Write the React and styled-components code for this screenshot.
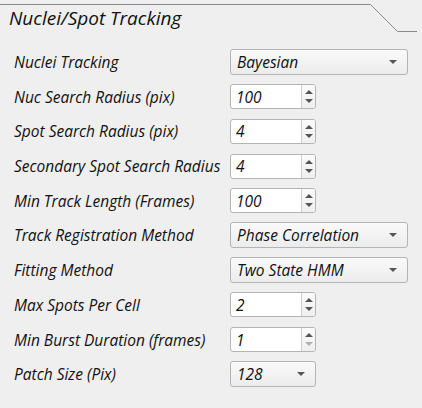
import styled, { createGlobalStyle } from "styled-components";

const GlobalStyle = createGlobalStyle`
  html, body {
    margin: 0;
    padding: 0;
    background: #efefef;
  }
  body {
    font-family: "Open Sans", "DejaVu Sans", sans-serif;
    font-style: italic;
    color: #111;
  }
`;

const rows = [
  { label: "Nuclei Tracking", kind: "combo", value: "Bayesian", width: 178 },
  { label: "Nuc Search Radius (pix)", kind: "spin", value: "100" },
  { label: "Spot Search Radius (pix)", kind: "spin", value: "4" },
  { label: "Secondary Spot Search Radius", kind: "spin", value: "4" },
  { label: "Min Track Length (Frames)", kind: "spin", value: "100" },
  { label: "Track Registration Method", kind: "combo", value: "Phase Correlation", width: 178 },
  { label: "Fitting Method", kind: "combo", value: "Two State HMM", width: 178 },
  { label: "Max Spots Per Cell", kind: "spin", value: "2" },
  { label: "Min Burst Duration (frames)", kind: "spin", value: "1", atMin: true },
  { label: "Patch Size (Pix)", kind: "combo", value: "128", width: 86 },
];

export default function App() {
  return (
    <Panel>
      <GlobalStyle />
      <Header>
        <Title>Nuclei/Spot Tracking</Title>
        <TabEdge width="422" height="36" viewBox="0 0 422 36">
          <polyline
            points="0,4.5 370.5,4.5 397.5,31.5 417,31.5"
            fill="none"
            stroke="#8a8a8a"
            strokeWidth="1"
          />
        </TabEdge>
      </Header>
      <Form>
        {rows.map((row) => (
          <Row key={row.label}>
            <Label>{row.label}</Label>
            {row.kind === "combo" ? (
              <Combo $width={row.width}>
                <span>{row.value}</span>
                <Arrow />
              </Combo>
            ) : (
              <Spin>
                <SpinText>{row.value}</SpinText>
                <SpinButtons>
                  <Tri $up />
                  <Tri $dim={row.atMin} />
                </SpinButtons>
              </Spin>
            )}
          </Row>
        ))}
      </Form>
    </Panel>
  );
}

const Panel = styled.div`
  width: 422px;
  height: 408px;
  background: #efefef;
  overflow: hidden;
`;

const Header = styled.div`
  position: relative;
  height: 36px;
  padding: 6px 0 0 9px;
  box-sizing: border-box;
`;

const TabEdge = styled.svg`
  position: absolute;
  left: 0;
  top: 0;
`;

const Title = styled.div`
  font-size: 19px;
  line-height: 24px;
  color: #111;
`;

const Form = styled.div`
  display: grid;
  grid-auto-rows: 26px;
  row-gap: 8.7px;
  padding: 13px 0 0 14px;
`;

const Row = styled.div`
  display: grid;
  grid-template-columns: 216px auto;
  align-items: center;
`;

const Label = styled.div`
  font-size: 15.5px;
  white-space: nowrap;
`;

const Combo = styled.div`
  width: ${(p) => p.$width}px;
  height: 26px;
  box-sizing: border-box;
  border: 1px solid #b4b4b4;
  border-radius: 3px;
  background: linear-gradient(#fafafa, #ececec);
  display: flex;
  align-items: center;
  justify-content: space-between;
  padding: 0 10px 0 6px;
  font-size: 15.5px;
`;

const Arrow = styled.span`
  width: 0;
  height: 0;
  border-left: 4px solid transparent;
  border-right: 4px solid transparent;
  border-top: 4px solid #555;
`;

const Spin = styled.div`
  width: 86px;
  height: 25px;
  box-sizing: border-box;
  border: 1px solid #b4b4b4;
  border-radius: 3px;
  background: #fff;
  display: flex;
  align-items: stretch;
`;

const SpinText = styled.div`
  flex: 1;
  display: flex;
  align-items: center;
  padding-left: 5px;
  font-size: 15.5px;
  border-right: 1px solid #cfcfcf;
`;

const SpinButtons = styled.div`
  width: 13px;
  display: flex;
  flex-direction: column;
  align-items: center;
  justify-content: center;
  gap: 5px;
  background: linear-gradient(#fbfbfb, #efefef);
  border-radius: 0 2px 2px 0;
`;

const Tri = styled.span`
  width: 0;
  height: 0;
  border-left: 4px solid transparent;
  border-right: 4px solid transparent;
  ${(p) =>
    p.$up
      ? `border-bottom: 4px solid #555;`
      : `border-top: 4px solid ${p.$dim ? "#b0b0b0" : "#555"};`}
`;
